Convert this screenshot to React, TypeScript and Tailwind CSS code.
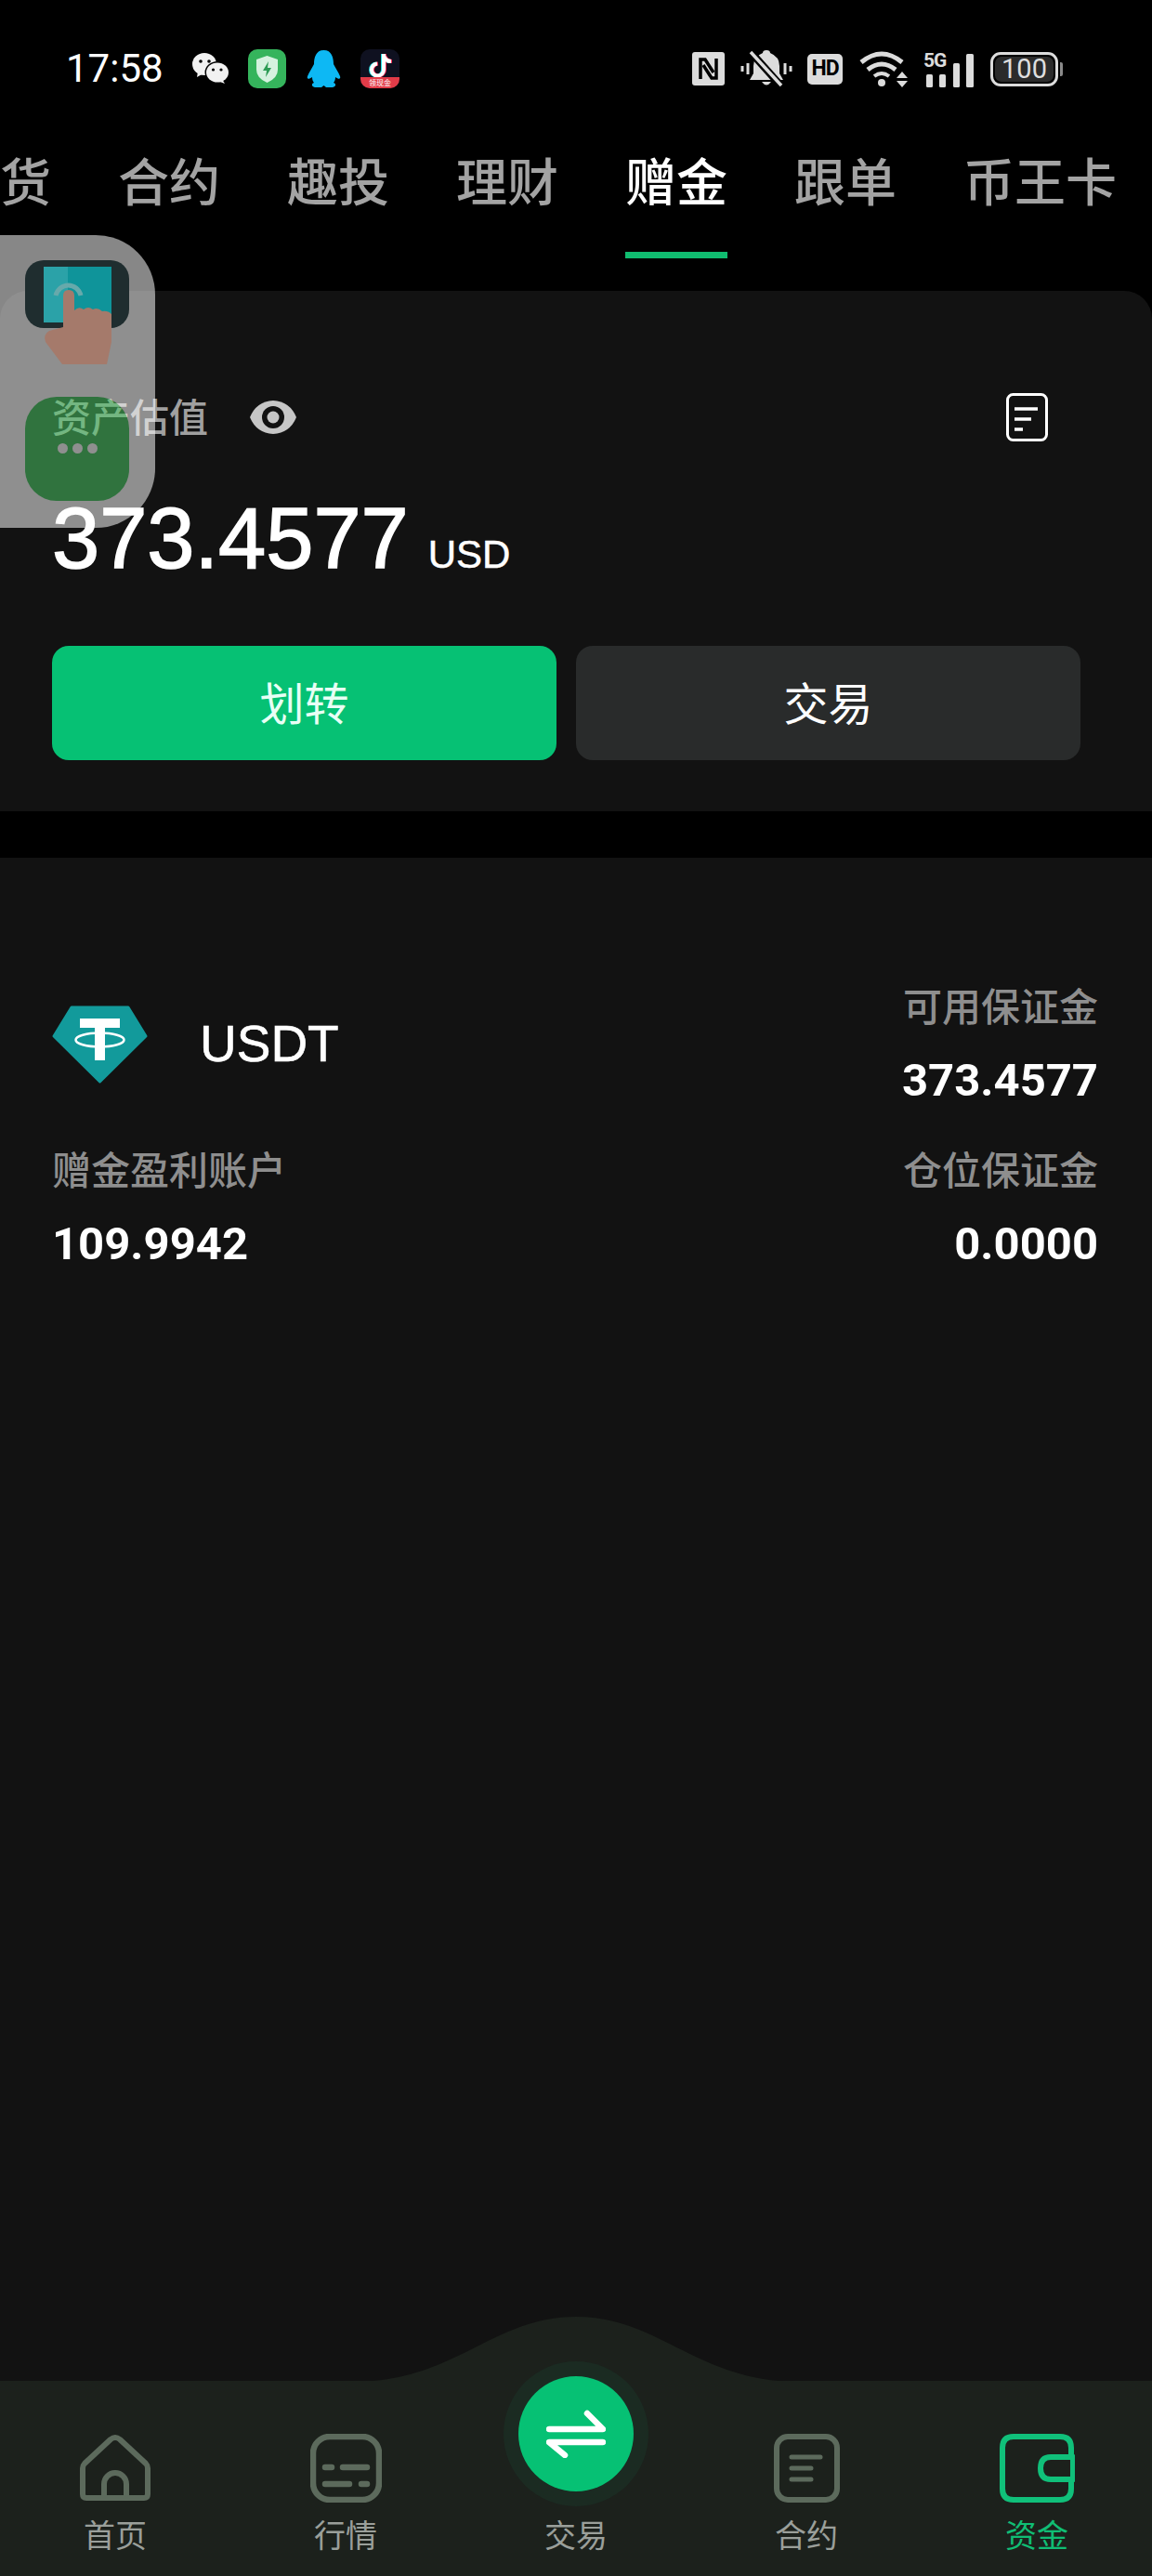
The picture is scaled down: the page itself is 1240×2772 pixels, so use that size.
import React from 'react';

const cjk = "font-['Noto_Sans_CJK_SC','Noto_Sans',sans-serif]";

const tabs = ['货', '合约', '趣投', '理财', '赠金', '跟单', '币王卡'];

const WeChatIcon = () => (
  <svg width="40" height="34" viewBox="0 0 40 34">
    <ellipse cx="13" cy="12" rx="13" ry="12" fill="#f2f2f2" />
    <path d="M6 20 L5 26 L12 22 Z" fill="#f2f2f2" />
    <circle cx="9" cy="9" r="1.8" fill="#000" />
    <circle cx="18" cy="9" r="1.8" fill="#000" />
    <ellipse cx="27" cy="21" rx="13.5" ry="12" fill="#000" />
    <ellipse cx="27" cy="21" rx="12" ry="10.5" fill="#f2f2f2" />
    <path d="M32 28 L35 33 L27 30 Z" fill="#f2f2f2" />
    <circle cx="22.5" cy="18" r="1.6" fill="#000" />
    <circle cx="31" cy="18" r="1.6" fill="#000" />
  </svg>
);

const ShieldIcon = () => (
  <svg width="41" height="42" viewBox="0 0 41 42">
    <rect width="41" height="42" rx="10" fill="#35b45c" />
    <path d="M20.5 7 L32 11 V22 Q32 31 20.5 36 Q9 31 9 22 V11 Z" fill="#d5f2df" />
    <path d="M22 13 L16 23 H20 L19 30 L25 20 H21 Z" fill="#2d9c55" />
  </svg>
);

const QQIcon = () => (
  <svg width="37" height="40" viewBox="0 0 37 40">
    <path
      d="M18.5 0 C27 0 29 8 29 15 C31 19 34 23 36 28 C37 31 35 32 31 29 C31 32 30 34 29 35 C32 36 32 39 28 40 H21 L18.5 38 L16 40 H9 C5 39 5 36 8 35 C7 34 6 32 6 29 C2 32 0 31 1 28 C3 23 6 19 8 15 C8 8 10 0 18.5 0 Z"
      fill="#0db8f4"
    />
  </svg>
);

const TikTokIcon = () => (
  <div className="relative w-[42px] h-[42px] rounded-[10px] bg-[#0f1120] overflow-hidden">
    <svg width="42" height="42" viewBox="0 0 42 42" className="absolute inset-0">
      <path d="M24 5 V22 A6.5 6.5 0 1 1 17 15.5 M24 7 Q26 13 32 13" fill="none" stroke="#25dfe6" strokeWidth="4" />
      <path d="M26 5 V22 A6.5 6.5 0 1 1 19 15.5 M26 7 Q28 13 34 13" fill="none" stroke="#fb2c55" strokeWidth="4" />
      <path d="M25 5 V22 A6.5 6.5 0 1 1 18 15.5 M25 7 Q27 13 33 13" fill="none" stroke="#fff" strokeWidth="4" />
    </svg>
    <div className={`${cjk} absolute bottom-0 left-0 right-0 h-[12px] bg-[#e23b48] text-white text-[8px] leading-[12px] text-center`}>
      领现金
    </div>
  </div>
);

const NfcIcon = () => (
  <svg width="35" height="36" viewBox="0 0 35 36">
    <rect width="35" height="36" rx="3" fill="#dcdcdc" />
    <path d="M9 29 V8 H14 L23 22" fill="none" stroke="#000" strokeWidth="3.5" />
    <path d="M26 7 V28 H21 L12 14" fill="none" stroke="#000" strokeWidth="3.5" />
  </svg>
);

const BellOffIcon = () => (
  <svg width="56" height="40" viewBox="0 0 56 40">
    <path d="M28 0 Q32 0 32 3 Q42 7 42 17 V25 L46 32 H10 L14 25 V17 Q14 7 24 3 Q24 0 28 0 Z" fill="#dcdcdc" />
    <path d="M23 34 H33 Q28 41 23 34 Z" fill="#dcdcdc" />
    <path d="M12 3 L45 40" stroke="#000" strokeWidth="8" />
    <path d="M11 2 L44 38" stroke="#dcdcdc" strokeWidth="3.5" />
    <path d="M2 17 V23 M8 14 V26 M48 14 V26 M54 17 V23" stroke="#dcdcdc" strokeWidth="3" />
  </svg>
);

const WifiIcon = () => (
  <svg width="53" height="39" viewBox="0 0 53 39">
    <path d="M2 12 Q24 -6 46 12" fill="none" stroke="#dcdcdc" strokeWidth="5" />
    <path d="M9 20 Q24 8 39 20" fill="none" stroke="#dcdcdc" strokeWidth="5" />
    <path d="M16 27 Q24 21 32 27" fill="none" stroke="#dcdcdc" strokeWidth="4" />
    <circle cx="24" cy="34" r="4" fill="#dcdcdc" />
    <path d="M40 29 L46 22 L52 29 Z M40 32 H52 L46 39 Z" fill="#dcdcdc" />
  </svg>
);

const SignalIcon = () => (
  <div className="relative w-[54px] h-[39px]">
    <svg width="54" height="39" viewBox="0 0 54 39" className="absolute inset-0">
      <rect x="3" y="25" width="7" height="14" rx="1.5" fill="#dcdcdc" />
      <rect x="17" y="25" width="7" height="14" rx="1.5" fill="#dcdcdc" />
      <rect x="32" y="13" width="7" height="26" rx="1.5" fill="#dcdcdc" />
      <rect x="46" y="3" width="8" height="36" rx="1.5" fill="#dcdcdc" />
    </svg>
    <span className="absolute left-0 -top-[2px] font-['Roboto'] font-bold text-[21px] leading-[24px] tracking-[-1px] text-[#dcdcdc]">
      5G
    </span>
  </div>
);

const BatteryIcon = () => (
  <div className="flex items-center gap-[2px]">
    <div className="w-[73px] h-[37px] rounded-[11px] border-[3px] border-[#dcdcdc] p-[2px]">
      <div className="w-full h-full rounded-[7px] bg-[#2b2b2b] flex items-center justify-center font-['Roboto'] text-[29px] leading-none text-[#dedede]">
        100
      </div>
    </div>
    <div className="w-[3px] h-[15px] rounded-r-[2px] bg-[#8a8a8a]" />
  </div>
);

const EyeIcon = () => (
  <svg width="52" height="36" viewBox="0 0 52 36">
    <path d="M1 18 Q8 1 26 0 Q44 1 51 18 Q44 35 26 36 Q8 35 1 18 Z" fill="#c6c6c6" />
    <circle cx="26" cy="18" r="12" fill="#121212" />
    <circle cx="26" cy="18" r="6.5" fill="#c6c6c6" />
  </svg>
);

const RecordIcon = () => (
  <svg width="45" height="52" viewBox="0 0 45 52">
    <rect x="1.5" y="1.5" width="42" height="49" rx="6" fill="none" stroke="#fff" strokeWidth="3" />
    <path d="M9 17 H34 M9 28 H27 M9 39 H18" stroke="#fff" strokeWidth="3.5" />
  </svg>
);

const TetherIcon = () => (
  <svg width="103" height="84" viewBox="0 0 103 84">
    <path d="M21 2 H82 L101 33 L51.5 82 L2 33 Z" fill="#129a9b" stroke="#129a9b" strokeWidth="3" strokeLinejoin="round" />
    <path d="M30 14 H73 V24 H57 V59 H46 V24 H30 Z" fill="#fff" />
    <ellipse cx="51.5" cy="37" rx="26" ry="7.5" fill="none" stroke="#fff" strokeWidth="2.5" />
  </svg>
);

const HomeIcon = () => (
  <svg width="76" height="76" viewBox="0 0 76 76">
    <path
      d="M7 69 Q3 69 3 65 V37 Q3 34 5 32 L33 6 Q38 2 43 6 L71 32 Q73 34 73 37 V65 Q73 69 69 69 Z"
      fill="none"
      stroke="#5c6a5c"
      strokeWidth="6"
      strokeLinejoin="round"
    />
    <path d="M26 69 V54 A12 12 0 0 1 50 54 V69" fill="none" stroke="#5c6a5c" strokeWidth="6" />
  </svg>
);

const MarketIcon = () => (
  <svg width="77" height="74" viewBox="0 0 77 74">
    <rect x="3" y="3" width="71" height="68" rx="18" fill="none" stroke="#5c6a5c" strokeWidth="6.5" />
    <path d="M16 36 H23 M35 36 H61 M16 54 H42 M55 54 H61" stroke="#5c6a5c" strokeWidth="6.5" strokeLinecap="round" />
  </svg>
);

const ContractIcon = () => (
  <svg width="71" height="74" viewBox="0 0 71 74">
    <rect x="3" y="3" width="65" height="68" rx="12" fill="none" stroke="#5c6a5c" strokeWidth="6" />
    <path d="M19 25 H50 M19 37 H40 M19 49 H40" stroke="#5c6a5c" strokeWidth="5" strokeLinecap="round" />
  </svg>
);

const WalletIcon = () => (
  <svg width="81" height="74" viewBox="0 0 81 74">
    <path
      d="M77 25 V15 Q77 3 65 3 H15 Q3 3 3 15 V59 Q3 71 15 71 H65 Q77 71 77 59 V49"
      fill="none"
      stroke="#10c07a"
      strokeWidth="6"
    />
    <path d="M79 25 H55 Q44 25 44 37 Q44 49 55 49 H79 Z" fill="none" stroke="#10c07a" strokeWidth="6" strokeLinejoin="round" />
  </svg>
);

const TouchIcon = () => (
  <svg width="112" height="112" viewBox="0 0 112 112">
    <rect width="112" height="73" rx="20" fill="#1f2d2f" />
    <rect x="20" y="7" width="73" height="60" fill="#0f949a" />
    <rect x="20" y="7" width="26" height="60" fill="#2ba2a8" />
    <path d="M33 38 A14 15 0 0 1 60 38" fill="none" stroke="#67a9ab" strokeWidth="5" />
    <path
      d="M41 38 Q41 32 47 32 Q53 32 53 38 V54 Q58 49 63 53 Q68 49 73 53 Q78 50 83 55 Q89 54 93 58 V88 L88 112 H40 L22 88 Q19 80 26 76 L41 72 Z"
      fill="#a57a6b"
    />
  </svg>
);

const FloatingBall = () => (
  <div className="absolute left-0 top-[253px] w-[167px] h-[315px] rounded-r-[64px] overflow-hidden">
    {/* translucent layer so the page text shows through the green tile */}
    <div className="w-full h-full bg-white opacity-[.53] pt-[174px] pl-[27px]">
      <div className="w-[112px] h-[112px] rounded-[34px] bg-[#4cca66] flex justify-center gap-[5px] pt-[50px]">
        <span className="w-[11px] h-[11px] rounded-full bg-white" />
        <span className="w-[11px] h-[11px] rounded-full bg-white" />
        <span className="w-[11px] h-[11px] rounded-full bg-white" />
      </div>
    </div>
    <div className="absolute left-[27px] top-[27px]">
      <TouchIcon />
    </div>
  </div>
);

const StatItem = ({ label, value, right }: { label: string; value: string; right?: boolean }) => (
  <div className={right ? 'text-right' : ''}>
    <div className={`${cjk} font-medium text-[42px] leading-[54px] pb-[6px] text-[#8e8e8e]`}>{label}</div>
    <div className="mt-[19px] font-['Roboto'] font-bold text-[49px] leading-[60px] text-white">{value}</div>
  </div>
);

const navItems = [
  { label: '首页', icon: HomeIcon },
  { label: '行情', icon: MarketIcon },
  { label: '交易', icon: null },
  { label: '合约', icon: ContractIcon },
  { label: '资金', icon: WalletIcon },
];

export default function App() {
  return (
    <div className="relative w-[1240px] h-[2772px] bg-black overflow-hidden flex flex-col">
      {/* status bar */}
      <div className="h-[148px] flex items-center justify-between pl-[71px] pr-[96px]">
        <div className="flex items-center">
          <span className="w-[106px] font-['Roboto'] text-[42px] leading-none text-white">17:58</span>
          <div className="ml-[30px]"><WeChatIcon /></div>
          <div className="ml-[20px]"><ShieldIcon /></div>
          <div className="ml-[22px]"><QQIcon /></div>
          <div className="ml-[21px]"><TikTokIcon /></div>
        </div>
        <div className="flex items-center">
          <NfcIcon />
          <div className="ml-[17px]"><BellOffIcon /></div>
          <div className="ml-[16px] w-[38px] h-[33px] rounded-[5px] bg-[#dcdcdc] flex items-center justify-center font-['Roboto'] font-bold text-[23px] tracking-[-1px] text-black">
            HD
          </div>
          <div className="ml-[18px]"><WifiIcon /></div>
          <div className="ml-[16px]"><SignalIcon /></div>
          <div className="ml-[18px]"><BatteryIcon /></div>
        </div>
      </div>

      {/* tabs */}
      <div className="h-[165px] overflow-hidden">
        <div className={`${cjk} flex gap-[72px] pt-[9px]`}>
          {tabs.map((tab) => (
            <div key={tab} className="shrink-0">
              <div className={`text-[55px] leading-[70px] whitespace-nowrap font-medium ${tab === '赠金' ? 'text-white' : 'text-[#a3a3a3]'}`}>
                {tab}
              </div>
              <div className={`mt-[44px] h-[7px] ${tab === '赠金' ? 'bg-[#10bd70]' : ''}`} />
            </div>
          ))}
        </div>
      </div>

      {/* asset card */}
      <div className="h-[560px] rounded-t-[30px] bg-[#121212] pt-[110px] pl-[56px] pr-[77px]">
        <div className="flex items-center justify-between h-[52px]">
          <div className="flex items-center">
            <span className={`${cjk} font-medium text-[42px] leading-[52px] pb-[5px] text-[#a0a0a0]`}>资产估值</span>
            <div className="ml-[44px]"><EyeIcon /></div>
          </div>
          <div className="mr-[35px]"><RecordIcon /></div>
        </div>
        <div className="mt-[54px] flex items-baseline font-['Liberation_Sans'] text-white">
          <span className="text-[92px] leading-[100px] [-webkit-text-stroke:1.5px_#fff]">373.4577</span>
          <span className="ml-[21px] text-[42px] [-webkit-text-stroke:.5px_#fff]">USD</span>
        </div>
        <div className={`${cjk} mt-[66px] flex gap-[21px]`}>
          <button className="flex-1 h-[123px] pb-[5px] rounded-[18px] bg-[#06c174] text-[48px] text-[#e8fff5]">划转</button>
          <button className="flex-1 h-[123px] pb-[5px] rounded-[18px] bg-[#292b2b] text-[48px] text-white">交易</button>
        </div>
      </div>

      {/* account section */}
      <div className="mt-[50px] flex-1 bg-[#121212] pt-[131px] pl-[56px] pr-[58px]">
        <div className="flex items-center justify-between">
          <div className="flex items-center">
            <TetherIcon />
            <span className="ml-[56px] font-['Liberation_Sans'] text-[55px] text-white [-webkit-text-stroke:.6px_#fff]">USDT</span>
          </div>
          <StatItem label="可用保证金" value="373.4577" right />
        </div>
        <div className="mt-[37px] flex items-start justify-between">
          <StatItem label="赠金盈利账户" value="109.9942" />
          <StatItem label="仓位保证金" value="0.0000" right />
        </div>
      </div>

      {/* bottom nav */}
      <div className={`${cjk} relative h-[210px] bg-[#1c211c] grid grid-cols-5 pt-[57px]`}>
        <svg width="520" height="72" viewBox="0 0 520 72" className="absolute left-[360px] -top-[71px]">
          <path d="M20 72 C130 72 170 2 260 2 C350 2 390 72 500 72 Z" fill="#1c211c" />
        </svg>
        {navItems.map((item) => (
          <div key={item.label} className="flex flex-col items-center">
            <div className="relative h-[76px] flex items-start justify-center">
              {item.icon ? (
                <item.icon />
              ) : (
                <div className="absolute -top-[78px] left-1/2 -translate-x-1/2 w-[156px] h-[156px] rounded-full bg-[#1b2b22] flex items-center justify-center">
                  <div className="w-[124px] h-[124px] rounded-full bg-[#06c174] flex items-center justify-center">
                    <svg width="64" height="52" viewBox="0 0 64 52">
                      <path d="M3 21 H61 L44 4 M61 35 H3 L20 49" fill="none" stroke="#fff" strokeWidth="6.5" strokeLinecap="round" strokeLinejoin="round" />
                    </svg>
                  </div>
                </div>
              )}
            </div>
            <div className={`mt-[8px] text-[34px] leading-[48px] ${item.label === '资金' ? 'text-[#10bd74]' : 'text-[#9a9f9a]'}`}>
              {item.label}
            </div>
          </div>
        ))}
      </div>

      <FloatingBall />
    </div>
  );
}
